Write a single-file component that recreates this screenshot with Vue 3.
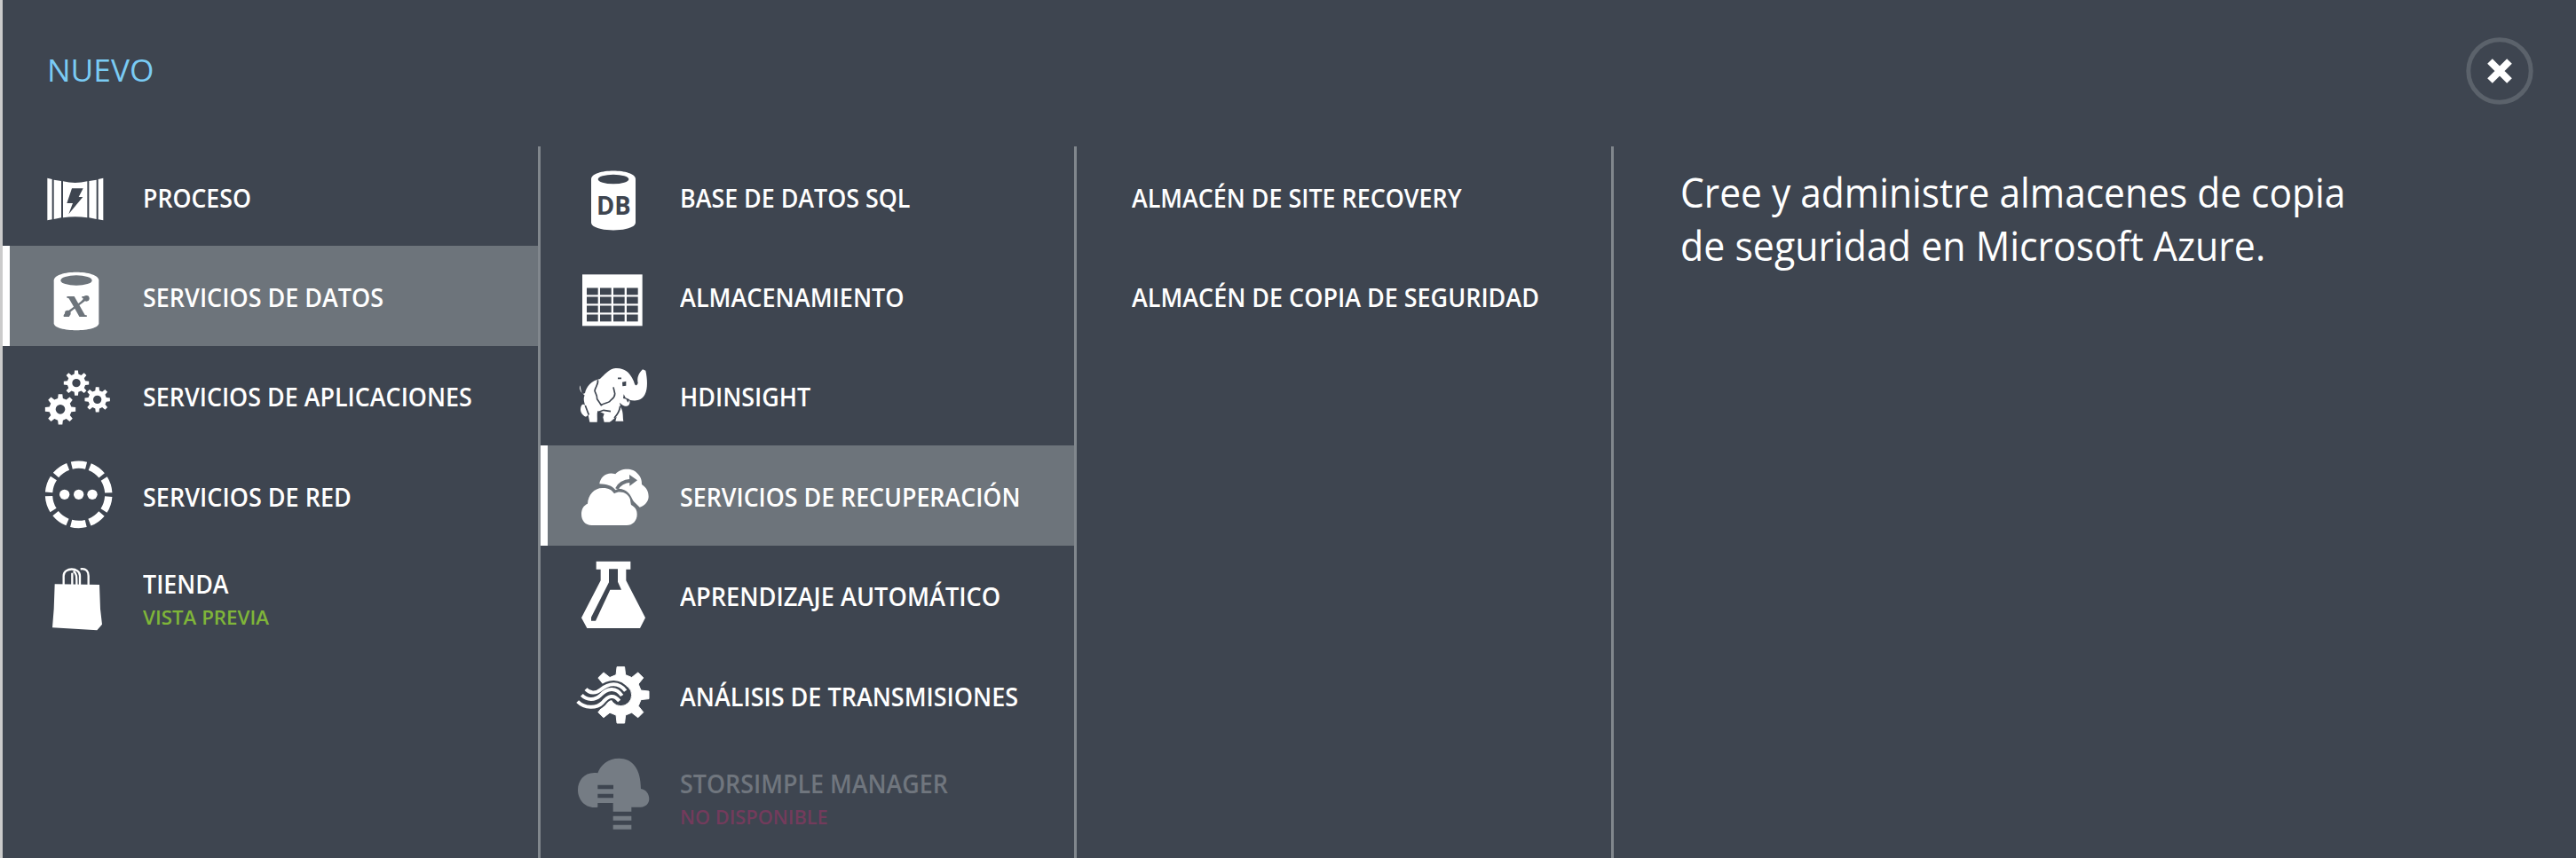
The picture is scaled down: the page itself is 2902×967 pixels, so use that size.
<script setup>
// Builds a toothed wheel outline; teeth listed in `skip` are left out.
function gear(cx, cy, outer, body, hole, teeth, skip = []) {
  const step = (Math.PI * 2) / teeth
  const pt = (r, a) => `${(cx + r * Math.cos(a)).toFixed(1)},${(cy + r * Math.sin(a)).toFixed(1)}`
  const pts = []
  for (let i = 0; i < teeth; i++) {
    const a = i * step - Math.PI / 2
    const tip = skip.includes(i) ? body : outer
    pts.push(pt(body, a - step * 0.29), pt(tip, a - step * 0.17), pt(tip, a + step * 0.17), pt(body, a + step * 0.29))
  }
  const ring = `M${cx - hole},${cy}a${hole},${hole} 0 1,0 ${hole * 2},0a${hole},${hole} 0 1,0 ${-hole * 2},0Z`
  return `M${pts.join('L')}Z${ring}`
}

const appGears = [
  gear(138, 94, 43, 31, 14, 8),
  gear(209, 150, 43, 31, 14, 8),
  gear(84, 183, 52, 38, 16, 8),
].join('')
const streamGear = gear(178, 850, 96, 70, 37, 8, [6])
const waves = [
  'M60 830C72 844 94 846 110 832C138 808 172 806 194 836',
  'M46 850C64 868 90 868 108 852C132 826 162 822 182 852',
  'M32 872C56 896 96 896 116 876C136 852 154 846 173 870',
]

const columns = [
  {
    id: 'categories',
    items: [
      { label: 'PROCESO', width: 122, icon: 'compute', box: '0 -45 300 337.2' },
      { label: 'SERVICIOS DE DATOS', width: 271.5, icon: 'data', box: '0 292 300 337.2', active: true },
      { label: 'SERVICIOS DE APLICACIONES', width: 370.5, icon: 'apps', box: '0 -31 300 337.2' },
      { label: 'SERVICIOS DE RED', width: 234.5, icon: 'network', box: '0 307 300 337.2' },
      { label: 'TIENDA', width: 96.6, icon: 'store', box: '0 644 300 337.2', note: 'VISTA PREVIA', noteWidth: 142, tone: 'preview' },
    ],
  },
  {
    id: 'services',
    items: [
      { label: 'BASE DE DATOS SQL', width: 259.5, icon: 'sql', box: '0 -45 300 337.2' },
      { label: 'ALMACENAMIENTO', width: 253, icon: 'table', box: '0 292 300 337.2' },
      { label: 'HDINSIGHT', width: 147, icon: 'elephant', box: '0 629 300 337.2' },
      { label: 'SERVICIOS DE RECUPERACIÓN', width: 383.5, icon: 'recovery', box: '0 7 300 337.2', active: true },
      { label: 'APRENDIZAJE AUTOMÁTICO', width: 361.5, icon: 'flask', box: '0 344 300 337.2' },
      { label: 'ANÁLISIS DE TRANSMISIONES', width: 381.5, icon: 'stream', box: '0 681 300 337.2' },
      { label: 'STORSIMPLE MANAGER', width: 302, icon: 'storsimple', box: '0 1018 300 337.2', note: 'NO DISPONIBLE', noteWidth: 167, tone: 'missing', disabled: true },
    ],
  },
  {
    id: 'vaults',
    items: [
      { label: 'ALMACÉN DE SITE RECOVERY', width: 372 },
      { label: 'ALMACÉN DE COPIA DE SEGURIDAD', width: 459 },
    ],
  },
]

const summary = [
  { text: 'Cree y administre almacenes de copia', width: 749 },
  { text: 'de seguridad en Microsoft Azure.', width: 659 },
]

// Condenses a line of text to the width given for it.
const vFit = {
  mounted(el, { value }) {
    el.style.transform = `scaleX(${value / el.offsetWidth})`
  },
}
</script>

<template>
  <div class="drawer">
    <header class="head">
      <h1><span v-fit="120" class="fit">NUEVO</span></h1>
      <button class="close" aria-label="Cerrar">
        <svg viewBox="0 0 76 76">
          <circle cx="38" cy="38" r="35.2" fill="none" stroke="#5b626b" stroke-width="5" />
          <path d="M27 27L49 49M49 27L27 49" stroke="#fff" stroke-width="8" />
        </svg>
      </button>
    </header>

    <div class="columns">
      <ul v-for="col in columns" :key="col.id" class="column" :class="col.id">
        <li v-for="item in col.items" :key="item.label" class="item" :class="{ active: item.active, disabled: item.disabled }">
          <svg v-if="item.icon" class="icon" :viewBox="item.box">
            <g v-if="item.icon === 'compute'">
              <path d="M40 62L56 66V202L40 205ZM62 68L87 72V196L62 201ZM93 73Q134 83 175 73V196Q134 190 93 196ZM181 72L206 68V201L181 196ZM212 66L229 62V205L212 202Z" />
              <path class="cut" d="M123 97H161L146 126H160L112 184L126 147H106Z" />
            </g>
            <g v-else-if="item.icon === 'data'">
              <path d="M62 410C62 372 214 372 214 410V554C214 586 62 586 62 554Z" />
              <ellipse class="cut" cx="138" cy="409" rx="53" ry="17" />
              <text class="cut mark-x" x="139" y="531" text-anchor="middle" textLength="84" lengthAdjust="spacingAndGlyphs">x</text>
              <circle class="cut" cx="109" cy="520" r="10" />
              <circle class="cut" cx="172" cy="470" r="10" />
            </g>
            <path v-else-if="item.icon === 'apps'" :d="appGears" fill-rule="evenodd" />
            <g v-else-if="item.icon === 'network'">
              <circle cx="146" cy="473" r="101" fill="none" stroke="#fff" stroke-width="25" stroke-dasharray="50.5 12.96" stroke-dashoffset="25" transform="rotate(-90 146 473)" />
              <circle cx="98" cy="473" r="17" />
              <circle cx="146" cy="473" r="17" />
              <circle cx="192" cy="473" r="17" />
            </g>
            <g v-else-if="item.icon === 'store'">
              <path d="M65 774L216 776L219 858L225 910L208 930L57 921L62 858Z" />
              <path d="M95 780V746C95 716 150 716 150 746V780M124 780V736M128 730C140 738 139 748 139 780M152 723C172 720 179 732 179 746V780" fill="none" stroke="#fff" stroke-width="7" />
            </g>
            <g v-else-if="item.icon === 'sql'">
              <path d="M78 66C78 28 228 28 228 66V212C228 247 78 247 78 212Z" />
              <ellipse class="cut" cx="153" cy="66" rx="52" ry="16" />
              <text class="cut mark-db" x="154" y="187" text-anchor="middle" textLength="116" lengthAdjust="spacingAndGlyphs">DB</text>
            </g>
            <g v-else-if="item.icon === 'table'">
              <rect x="48" y="389" width="203" height="174" />
              <template v-for="r in 4" :key="r">
                <rect v-for="c in 4" :key="c" class="cut" :x="18 + c * 45" :y="404.5 + r * 30" width="38" height="23.5" />
              </template>
            </g>
            <g v-else-if="item.icon === 'elephant'">
              <path d="M41 762C44 790 50 794 57 788C62 766 78 746 108 740C122 728 138 706 160 704C190 702 206 718 216 736L222 748C226 762 230 768 236 754C232 736 238 722 252 708L262 712C268 740 270 772 260 792C250 814 228 816 207 811C212 824 204 834 192 832C184 830 178 824 174 820L178 836C188 854 184 870 187 883H160L164 868C156 872 148 882 140 886H122L118 870L122 858L100 848C96 858 100 872 98 886H73L68 862L60 868C46 862 38 848 44 832C48 824 54 826 58 830C52 814 52 802 56 796L44 784C38 776 38 768 41 762Z" />
              <g class="line">
                <path d="M100 744C104 758 92 766 90 780C92 790 98 792 98 808C104 816 108 824 112 829C120 822 132 822 140 817C146 808 158 806 158 790L153 768" />
                <path d="M168 738H180M104 852L120 846L144 850M176 832C174 850 166 862 156 872M58 830L70 862" />
              </g>
              <path class="cut" d="M183 751L196 748V763L184 765ZM188 792L194 804L208 810L202 820L196 808L186 806Z" />
            </g>
            <g v-else-if="item.icon === 'recovery'">
              <path d="M106 137C108 114 132 94 160 104C176 84 218 80 236 104C248 116 249 128 249 139C266 150 272 164 272 180C272 196 258 212 242 216L222 197C212 182 210 168 190 158C178 152 168 153 160 158C148 142 130 138 106 137Z" />
              <path d="M66 204C68 174 88 150 118 151C138 151 148 158 156 170C176 158 204 168 210 190C211 198 212 204 213 208C230 218 233 228 233 240C233 262 218 277 198 277H80C58 277 45 260 45 240C45 222 52 210 66 204Z" />
              <path class="line thick" d="M165 154C172 138 188 128 212 126" />
              <path class="cut" d="M207 106L234 125L208 144Z" />
            </g>
            <g v-else-if="item.icon === 'flask'">
              <path d="M95 397H211V424H196V462L261 588L243 623H64L45 588L110 462V424H95Z" />
              <path class="cut" d="M138 423H168V466L180 493H142L93 598H78V586L138 468Z" />
            </g>
            <g v-else-if="item.icon === 'stream'">
              <path :d="streamGear" fill-rule="evenodd" stroke="#fff" stroke-width="3" stroke-linejoin="round" />
              <path v-for="w in waves" :key="w" class="line wide" :d="w" />
              <path v-for="w in waves" :key="'w' + w" :d="w" fill="none" stroke="#fff" stroke-width="12" />
            </g>
            <g v-else-if="item.icon === 'storsimple'">
              <path d="M100 1115C110 1086 136 1065 172 1065C216 1065 246 1098 246 1168C262 1170 274 1184 274 1202C274 1218 262 1230 246 1230H214V1245H152V1216H100V1230C62 1238 33 1208 33 1172C33 1138 58 1108 100 1115ZM152 1260H214V1275H152ZM152 1290H214V1305H152Z" />
              <path class="cut" d="M100 1155H153V1169H100ZM100 1185H153V1199H100Z" />
            </g>
          </svg>
          <div class="text" :class="{ stacked: item.note }">
            <span v-fit="item.width" class="fit label">{{ item.label }}</span>
            <span v-if="item.note" v-fit="item.noteWidth" class="fit note" :class="item.tone">{{ item.note }}</span>
          </div>
        </li>
      </ul>
      <section class="summary">
        <span v-for="line in summary" :key="line.text" v-fit="line.width" class="fit">{{ line.text }}</span>
      </section>
    </div>
  </div>
</template>

<style>
body {
  margin: 0;
  background: #3e4550;
}
</style>

<style scoped>
.drawer {
  --bg: #3e4550;
  box-sizing: border-box;
  display: flex;
  flex-direction: column;
  width: 2902px;
  height: 967px;
  overflow: hidden;
  border-left: 3px solid #cbcbcb;
  background: var(--bg);
  color: #fff;
  font-family: 'Open Sans', 'Noto Sans', sans-serif;
}
.head {
  box-sizing: border-box;
  display: flex;
  justify-content: space-between;
  align-items: flex-start;
  height: 165px;
  padding: 42px 48px 0 50px;
}
h1 {
  margin: 13px 0 0;
  color: #7acbf4;
  font-size: 35px;
  font-weight: 500;
  line-height: 48px;
}
.close {
  width: 76px;
  height: 76px;
  padding: 0;
  border: 0;
  background: none;
}
.close svg {
  display: block;
  width: 76px;
  height: 76px;
}
.fit {
  display: block;
  width: max-content;
  white-space: nowrap;
  transform-origin: 0 50%;
}
.columns {
  display: flex;
  flex: 1;
}
.column {
  box-sizing: border-box;
  width: 605px;
  margin: 0;
  padding: 0;
  border-right: 3px solid #81878d;
  list-style: none;
}
.categories {
  width: 606px;
}
.services {
  width: 604px;
}
.item {
  box-sizing: border-box;
  display: flex;
  align-items: center;
  height: 112.4px;
  padding-left: 37px;
}
.services .item {
  padding-left: 31px;
}
.vaults .item {
  padding-left: 62px;
}
.item.active {
  --bg: #6d747b;
  background: var(--bg);
  box-shadow: inset 8px 0 #fff;
}
.icon {
  flex: none;
  width: 100px;
  height: 112.4px;
  fill: #fff;
}
.disabled .icon {
  fill: #757c84;
}
.cut {
  fill: var(--bg);
}
.line {
  fill: none;
  stroke: var(--bg);
  stroke-width: 5;
}
.thick {
  stroke-width: 12;
}
.wide {
  stroke-width: 25;
}
.mark-x {
  font: italic bold 150px 'Liberation Serif', serif;
}
.mark-db {
  font: bold 84px 'Open Sans', sans-serif;
}
.text {
  margin-left: 20.7px;
  padding-top: 3px;
}
.services .text {
  margin-left: 26px;
}
.vaults .text {
  margin-left: 0;
}
.text.stacked {
  padding-top: 8px;
}
.label {
  font-size: 28px;
  font-weight: 600;
  line-height: 36px;
}
.note {
  margin-top: 4px;
  font-size: 22px;
  font-weight: 600;
  line-height: 30px;
}
.disabled .label {
  color: #70767e;
}
.preview {
  color: #7fb539;
}
.missing {
  color: #733b5c;
}
.summary {
  padding: 22px 0 0 75px;
  font-size: 45px;
  line-height: 59.5px;
}
</style>
